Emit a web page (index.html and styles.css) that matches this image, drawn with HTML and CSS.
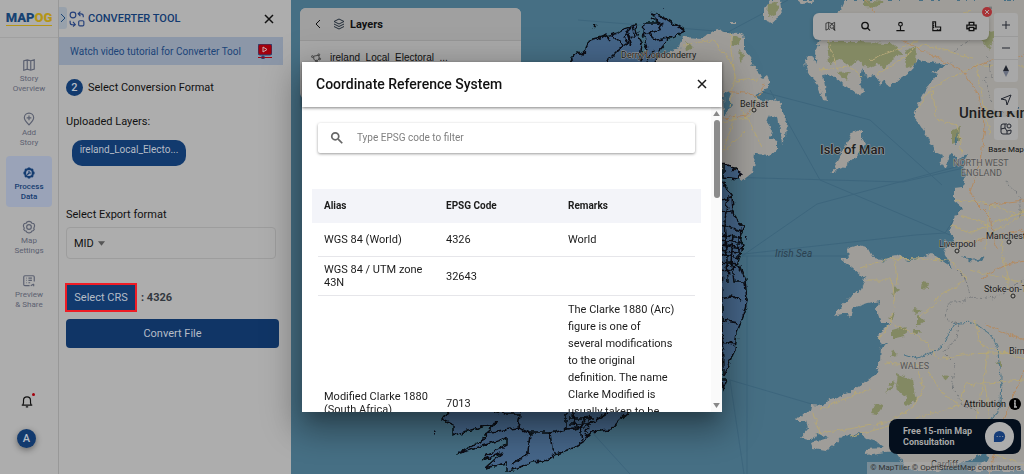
FILE: index.html
```html
<!DOCTYPE html>
<html lang="en">
<head>
  <meta charset="UTF-8">
  <meta name="viewport" content="width=device-width, initial-scale=1.0">
  <title>Converter Tool</title>
  <link rel="stylesheet" href="styles.css">
</head>
<body>
  <div class="app">

    <!-- Sidebar -->
    <nav class="sidebar">
      <a class="logo" href="#" aria-label="Home">
        <span class="logo-blue">MAP</span><span class="logo-yellow">OG</span>
      </a>
      <div class="nav">
        <a class="nav-item" href="#">
          <svg viewBox="0 0 24 24"><path d="M3 5l6-2 6 2 6-2v16l-6 2-6-2-6 2zM9 3v16M15 5v16"/></svg>
          Story<br>Overview
        </a>
        <a class="nav-item" href="#">
          <svg viewBox="0 0 24 24"><path d="M12 22c-5-5-8-8-8-12a8 8 0 0 1 16 0c0 4-3 7-8 12zM12 6v8M8 10h8"/></svg>
          Add<br>Story
        </a>
        <a class="nav-item active" href="#">
          <svg class="gear" viewBox="0 0 24 24"><path d="M12 2.500v19M2.500 12h19M5.300 5.300l13.400 13.400M18.700 5.300L5.300 18.700" stroke-width="4"/><circle cx="12" cy="12" r="7" stroke-width="3"/><circle class="gear-hole" cx="12" cy="12" r="5"/><path d="M12 12V8M12 12h4M12 12l-3 3" stroke-width="2"/></svg>
          Process<br>Data
        </a>
        <a class="nav-item" href="#">
          <svg viewBox="0 0 24 24"><path d="M8.500 3.500Q12 1 15.500 3.500l1.500 2 3 .5q2.500 3 1 6-1.500 3 0 4-1 3-4 3l-1.500 2q-3.500 2-7 0L7 19q-3 0-4-3 1.500-2 0-4-1.500-3 1-6l3-.5z"/><circle cx="12" cy="12" r="4"/></svg>
          Map<br>Settings
        </a>
        <a class="nav-item" href="#">
          <svg viewBox="0 0 24 24"><path d="M13 20H5a2 2 0 0 1-2-2V5a2 2 0 0 1 2-2h14a2 2 0 0 1 2 2v8M7 7h1M11 7h6M7 11h1M11 11h6M7 15h1M11 15h3M15 20l5-3M20 17v4"/></svg>
          Preview<br>&amp; Share
        </a>
      </div>
      <div class="account">
        <button class="bell" aria-label="Notifications">
          <svg viewBox="0 0 24 24"><path d="M3 19h18M5 19l1-4v-4a6 6 0 0 1 12 0v4l1 4M10 22h4"/></svg>
          <span class="bell-dot"></span>
        </button>
        <button class="avatar">A</button>
      </div>
    </nav>

    <!-- Converter panel -->
    <section class="panel">
      <header class="panel-header">
        <button class="collapse" aria-label="Collapse"><svg viewBox="0 0 8 12"><path d="M2 2l4 4-4 4"/></svg></button>
        <svg class="convert-icon" viewBox="0 0 28 28"><circle cx="7" cy="7" r="5"/><rect x="17" y="17" width="9" height="9" rx="2"/><path d="M25 11V9a4 4 0 0 0-4-4h-4M20 1l-4 4 4 4M2 17v3a4 4 0 0 0 4 4h4M7 19l4 5-4 3"/></svg>
        <h1>CONVERTER TOOL</h1>
        <button class="close" aria-label="Close"><svg viewBox="0 0 12 12"><path d="M2 2l8 8M10 2l-8 8"/></svg></button>
      </header>
      <a class="tutorial" href="#">
        Watch video tutorial for Converter Tool
        <svg viewBox="0 0 14 15"><rect width="14" height="11" rx="2" fill="#a3000c"/><path d="M5 3l4 2.500-4 2.500z" fill="none" stroke="#c9b0b2"/><path d="M0 13.500h14" stroke="#a3000c"/><circle cx="5" cy="13.500" r="1.500" fill="#a3000c"/></svg>
      </a>
      <div class="panel-body">
        <h2 class="step"><span class="step-number">2</span>Select Conversion Format</h2>
        <h3 class="uploaded-title">Uploaded Layers:</h3>
        <div class="layer-chip">ireland_Local_Electo...</div>
        <label class="export-label" for="format">Select Export format</label>
        <div class="select-box">
          <select id="format"><option>MID</option></select>
          <svg viewBox="0 0 8 5"><path d="M0 0h8L4 5z"/></svg>
        </div>
        <div class="crs-row">
          <button class="crs-btn">Select CRS</button>
          <span>: 4326</span>
        </div>
        <button class="convert-btn">Convert File</button>
      </div>
    </section>

    <!-- Map -->
    <main class="map">
      <svg class="map-canvas" viewBox="291 0 733 474" preserveAspectRatio="xMinYMin slice">
        <defs>
          <filter id="rough" x="0" y="0" width="100%" height="100%">
            <feTurbulence type="fractalNoise" baseFrequency="0.17" numOctaves="3" seed="4"/>
            <feDisplacementMap in="SourceGraphic" scale="6" xChannelSelector="R" yChannelSelector="G"/>
          </filter>
          <filter id="relief" x="0" y="0" width="100%" height="100%">
            <feTurbulence type="fractalNoise" baseFrequency="0.07" numOctaves="4" seed="9" result="noise"/>
            <feDiffuseLighting in="noise" surfaceScale="3" lighting-color="#ffffff" result="light"><feDistantLight azimuth="225" elevation="60"/></feDiffuseLighting>
            <feComposite in="light" in2="SourceGraphic" operator="in"/>
          </filter>
          <g id="land">
            <path d="M650 163V62l10-6 20-8 3-11 20 1 14-9 8 3 15 1 5 5v13l5 6 1 6 9 10 3 6 4-3 3 6-2 6-8 3-5 7 12 3 8-2 7 8 2 10 3 6-1 14-4 6-1-7-3-19-8-2-3 8 5 8-2 7 7 3v8l-7 6-15-1-1 9-2 10-10 8-17-11z"/>
            <path d="M845 0l-4 9-12 9-9 20-5 15 2 11-3-6-5-2-4 5 2 11 11 13 5 15 4 1-2-15-2-11 5-1 7 3 12 10 13 10 3-7-3-12 2-10 5 10 8-2 6 9 2-5 4 5 3 1 13-9 9-7 5-10 13 2 15 3 8-3-11 5-10 6 5 2-10 12-7 13-7 17 7 8 8 12 7 15 7 3-2 10 5 2 7-14 5 7 11-7-5 12 3 12-4 10-8 1v12l9 8-8 9-5 13 5 13-12 7 5 10 5 8-9-6-13-9-16 7-7 0-12-6-10 6-15 6-6 12-4 12-10 6-11 12-6 8 12-3 4 4 3-9 15-5 12-2-4 7 5 15 9 0-13 13 4 9 10-3-10 6-1 13-5 14-14 10-13 8-20 7-5 6-12-1-1 6-10 5-5 5 11 0 2 7-8 9 13 3 5-7 10 5-17 5 2 6 12 2 10-6 8-9 10-1 5-2 10 6 10 3 7 6-20 1 1 6 12-2 17-2 10 15 10 5h117V0z"/>
            <path d="M848 248l10-3 9 2 6 11 10 1-6 9-14 10-11-10-12-9 9 0z"/>
            <path d="M862 129v9l3 5-10 15-12 10-11 4 5-10 8-15 7-14z"/>
            <path d="M770 0l-6 8v12l8 3 10-8-2-15zM797 0l5 4 10-1 1-3zM730 22h6v2h-6z"/>
          </g>
        </defs>

        <rect x="291" width="733" height="474" fill="#466f84"/>
        <g fill="none" stroke="#3d667d" stroke-width="1">
          <path d="M690 260l225-25 30-2 52-77-180 48-75 52M755 90l115 30 72 65M770 90l50 90 130 55M723 177l180 5 65-15M742 256h105M747 256v218M730 380l85 25M730 380l14 94M578 20l150 12 60-32M590 430l40 44"/>
        </g>
        <g filter="url(#rough)">
          <use href="#land" fill="#9f9d99"/>
          <g fill="#838964">
            <path d="M827 42l28 0 35 1 13 10-12 7-6 9-7-6-10 5-10-8-8 7-9-7-12 3zM905 52l11-5-1 17-8 4zM837 72l12-1-3 10zM864 0l20 2-8 6-12-1zM732 36l8 2-1 8-8-2zM738 50l8 5-5 9zM685 42l8 5-7 4zM952 130l8-3-1 14-7 3zM978 35l20-5-10 20zM922 281l7 1-1 7-7-1zM895 285l5 6-8 5zM896 312l-4 8-4-2zM913 308l10 2-8 5zM917 314l8 7-8 6zM892 330l15-4-3 10-12 3zM912 330l9 0-6 6zM898 374l15 6 4 20-12 6 2-8-11-10zM893 380l2 5-10 9zM876 403l8 2-7 10-6-1zM892 350l6 4-8 2zM942 375l8 1-6 4zM996 364l6-4v7zM768 3l10-1-2 12-9 3z"/>
          </g>
          <path d="M723 95l8-3-2 7 4 6-9 11zM930 474l35-12 20-8 5 5-30 15zM962 255l12 5 12-4-4 6-14-1zM957 130l1 13-3 4z" fill="#466f84"/>
          <path d="M905 354l12 4 15-6 12-7 9-20 7-2 13-1 18 12 6 12 4 30-1 30-8 14" fill="none" stroke="#4d7588"/>
        </g>
        <use href="#land" filter="url(#relief)" opacity=".14"/>
        <g filter="url(#rough)" fill="none">
          <path d="M683 45l30-5 20 24 3 17 22-2M730 32l5 45-5 30M722 122l28-5 8-20M742 110l20 37M736 112l-13 40 22-20M820 70l30-3 12 9M870 60l50-20 50-30M877 76l45-32 50 14M828 40l10 30M917 110l15-23 45-22 47 1M932 90l5 30 20 5 5 28M977 65l5 30 8 40M955 200l30 3 35 12M960 215l30 10 34-14M950 225l20 8 54-22M958 240l15 3 50-28M990 205l-5 45M860 268l30-10 60 2 18 20M867 280l25 0 3 22-5 22-12 16M890 322l30 15 20 23 24-6 60-2M885 363l40 3 15 24 20 17 5-22 59-5M870 388l-50 22M812 410l8 23 35-5 30-5 27-15 12-20-8-25M850 437l50-14 60-18M940 300l-20 17M935 300l30-20M988 350l-5 35-13 65M895 260l2 24M975 320l5 25 44 14M985 385l10 70 29 10M970 270l54 13M1000 234l10 60" stroke="#b4a778"/>
          <path d="M723 91l22 2 13 5 6-14M757 100l-10 15-24 3M865 0l20 25 17 15 30 15 30 15 15 22 8 35-5 35-10 30 5 10 15 15 7 33M967 70l25-10 32-5M985 205l39-5M960 245l64-15M980 280l22-14 22-5M985 325l39 15M1024 370l-20 50-15 54M900 430l50 20 70 0" stroke="#b38b62"/>
          <path d="M953 52l10-7 20-15 8-25M987 55l5 20-8 5 8 20 15 15M1005 180l15 18v20M957 270l8 8 5 18-10 7-12 0-2 16 14 6-6 18-12 8 14 14-5 20 12 20 15 6M970 296l24 3 30-20" stroke="#777a7c" stroke-dasharray="3 2"/>
        </g>

        <!-- electoral areas -->
        <g filter="url(#rough)" fill="#456588" stroke="#080c12" stroke-width="1.500">
          <path d="M563 70l15-18 5 2 7-14 20-5 8-2 4-3 13-5 2 8 5 10-2 17 7-10-4-17 1-10 14 0-5-10 15 7 17 11-15 7-10 12-8 20z"/>
          <path d="M723 163l7 3 11 8-3 5-15-2zM720 178l7 10 5 7 1 18 10 15-3 9 3 10-5 15 7 18 2 20-4 17-6 15-2 18-12 25zM722 380h5l-4 9z"/>
          <path d="M450 410l-8 10 11 5 0 10 44-12-10 9-4 8-16 8-10 6 50-16 0 7-20 10-4 5 20-8-18 16 22-5 0 9 26-10 17-2 3-5 20-7 10-6 7-10 20-2 7-8 13-12z"/>
          <g fill="none">
            <path d="M603 65l20-20-10-10M623 45l12-8-3-10M630 28l-6 10 8 8-5-15M643 34l15-3 5-8M648 32l8 8 14-2M654 50l-8 15M598 40l8-6 4 6M650 18l15 8"/>
            <path d="M720 200l13-2M720 212l13-1M728 196l-3 24 2 30M720 225l23 6M720 235l22 3M720 240l23 3M720 245l24 3M720 250l22 4M720 254l19 4M720 262l18 2M733 235l-2 30M738 236v23M726 240l2 42M720 270l9 1 9-7M732 264l2 18 11 0M720 298l12-2 10 4M720 320l18 3M720 342l15 2"/>
            <path d="M490 410l16 4 14 0-2 14-35 5M518 428l12 5 20 0 16-4 18-2 24-14M530 433l-2 20-16 12M550 433l2 15 6 8M566 412v18M572 412l5 18 12-16M580 426l2 15M590 414l-3 18M568 418l25 0M570 424h22"/>
            <path d="M593 26l3 1M663 5h1M747 238h1M434 433h1" stroke-width="3"/>
          </g>
        </g>

        <!-- place names -->
        <g class="places">
          <text x="621" y="58">Derry/Londonderry</text>
          <text x="740" y="107">Belfast</text>
          <text x="939" y="247">Liverpool</text>
          <text x="986" y="239">Manchester</text>
          <text x="984" y="292">Stoke-on-Trent</text>
          <text x="1009" y="354">Birmingham</text>
          <text x="931" y="467">Cardiff</text>
          <text class="country" x="820" y="154">Isle of Man</text>
          <text class="country big" x="959" y="118">United Kingdom</text>
          <text class="region" x="953" y="166">NORTH WEST</text>
          <text class="region" x="961" y="176">ENGLAND</text>
          <text class="region" x="900" y="369">WALES</text>
          <text class="sea" x="775" y="257">Irish Sea</text>
        </g>
        <g fill="#a8a6a2" stroke="#222222">
          <circle cx="754" cy="110" r="2"/><circle cx="957" cy="251" r="2"/><circle cx="1009" cy="242" r="2"/><circle cx="1013" cy="296" r="2"/>
        </g>
      </svg>

      <div class="layers">
        <div class="layers-header">
          <button aria-label="Back"><svg class="back" viewBox="0 0 8 12"><path d="M6 2L2 6l4 4"/></svg></button>
          <svg class="stack" viewBox="0 0 24 24"><path d="M12 2l10 5-10 5L2 7zM2 12l10 5 10-5M2 17l10 5 10-5"/></svg>
          <h2>Layers</h2>
        </div>
        <div class="layers-row">
          <svg viewBox="0 0 24 24"><path d="M6 9l11-2 1 8-6 5-6-4z"/><circle cx="3" cy="10" r="2"/><circle cx="17" cy="6" r="2"/><circle cx="19" cy="15" r="2"/><circle cx="12" cy="20" r="2"/></svg>
          <span>ireland_Local_Electoral_...</span>
        </div>
      </div>

      <div class="toolbar">
        <button aria-label="Search map"><svg viewBox="0 0 24 24" stroke-width="1.500"><path d="M11 19l-3-2-6 3V5l6-2 7 3 6-3v17l-3-2M8 3v14M15 6v2"/><circle cx="15" cy="12" r="4"/><path d="M18 15l4 6"/></svg></button>
        <button aria-label="Search"><svg viewBox="0 0 24 24" stroke-width="3"><circle cx="11" cy="10" r="7"/><path d="M16 15l6 6"/></svg></button>
        <button aria-label="Marker"><svg viewBox="0 0 24 24" stroke-width="2.500"><circle cx="12" cy="7" r="4"/><path d="M12 11v10M3 21h18"/></svg></button>
        <button aria-label="Measure"><svg viewBox="0 0 24 24" stroke-width="2.500"><path d="M4 2h6v11h11v8H4zM4 6h3M4 10h3M4 14h3M14 21v-3M18 21v-3"/></svg></button>
        <button aria-label="Print"><svg viewBox="0 0 24 24" stroke-width="3"><path d="M7 8V3h10v5M6 17H2V9h20v8h-4M7 14h10v7H7z"/></svg></button>
        <button class="toolbar-close" aria-label="Close toolbar"><svg viewBox="0 0 10 10"><path d="M3 3l4 4M7 3L3 7"/></svg></button>
      </div>

      <div class="controls">
        <div class="zoom">
          <button aria-label="Zoom in"><svg viewBox="0 0 12 12"><path d="M6 2v8M2 6h8"/></svg></button>
          <button aria-label="Zoom out"><svg viewBox="0 0 12 12"><path d="M2 6h8"/></svg></button>
          <button aria-label="Reset north"><svg viewBox="0 0 12 12"><path d="M6 0l3 6H3z" class="north"/><path d="M6 12l3-6H3z" class="south"/></svg></button>
        </div>
        <button class="control" aria-label="Locate"><svg viewBox="0 0 12 12"><path d="M1 5l10-4-4 10-1-5z"/></svg></button>
        <button class="control" aria-label="Base map"><svg viewBox="0 0 12 12"><path d="M7 1H3a2 2 0 0 0-2 2v6a2 2 0 0 0 2 2h6a2 2 0 0 0 2-2V7M5 1v4L1 6M5 5l2 3v3M7 8l4-1"/><circle cx="9" cy="3" r="2"/></svg></button>
        <span>Base Map</span>
      </div>

      <div class="map-footer">
        <a class="attribution" href="#">Attribution
          <svg viewBox="0 0 12 12"><circle cx="6" cy="6" r="6"/><path d="M6 2v2M5 5h1v4M5 9h3" stroke="#b0b0b0" stroke-width="1.500"/></svg>
        </a>
        <button class="consult">
          <span>Free 15-min Map<br>Consultation</span>
          <span class="consult-icon"><svg viewBox="0 0 14 14"><path d="M7 1a6 6 0 0 1 0 12H1V7a6 6 0 0 1 6-6z" fill="#153c78"/><path d="M4 7h1M7 7h1M10 7h1" stroke="#b0b0b0"/></svg></span>
        </button>
        <p class="copyright">© MapTiler © OpenStreetMap contributors</p>
      </div>
    </main>
  </div>

  <!-- CRS dialog -->
  <div class="modal">
    <div class="dialog" role="dialog" aria-labelledby="dialogTitle">
      <header class="dialog-header">
        <h2 id="dialogTitle">Coordinate Reference System</h2>
        <button class="close" aria-label="Close dialog"><svg viewBox="0 0 12 12"><path d="M2 2l8 8M10 2l-8 8"/></svg></button>
      </header>
      <div class="dialog-main">
        <div class="dialog-scroll">
          <label class="search">
            <svg viewBox="0 0 24 24"><circle cx="9" cy="9" r="6"/><path d="M14 14l7 7"/></svg>
            <input type="text" placeholder="Type EPSG code to filter" aria-label="EPSG code">
          </label>
          <table>
            <thead>
              <tr><th>Alias</th><th>EPSG Code</th><th>Remarks</th></tr>
            </thead>
            <tbody>
              <tr><td>WGS 84 (World)</td><td>4326</td><td>World</td></tr>
              <tr><td>WGS 84 / UTM zone 43N</td><td>32643</td><td></td></tr>
              <tr><td>Modified Clarke 1880 (South Africa)</td><td>7013</td><td>The Clarke 1880 (Arc) figure is one of several modifications to the original definition. The name Clarke Modified is usually taken to be the RGS adaptation. It is used for the older national mapping networks of southern Africa.</td></tr>
            </tbody>
          </table>
        </div>
        <div class="scrollbar" aria-hidden="true">
          <svg viewBox="0 0 8 6"><path d="M4 0l4 6H0z"/></svg>
          <div class="track"><div class="thumb" style="height: 28%"></div></div>
          <svg viewBox="0 0 8 6"><path d="M4 6l4-6H0z"/></svg>
        </div>
      </div>
    </div>
  </div>
</body>
</html>
```

FILE: styles.css
```css
* {
  box-sizing: border-box;
}

body {
  margin: 0;
  font-family: Roboto, sans-serif;
  font-size: 11px;
  color: #111111;
  background-color: #adadad;
}

h1, h2, h3, p {
  margin: 0;
  font-weight: 400;
}

button {
  padding: 0;
  border: none;
  background: none;
  font-family: inherit;
  color: inherit;
  cursor: pointer;
}

a {
  color: inherit;
  text-decoration: none;
}

svg {
  display: block;
  flex-shrink: 0;
  fill: none;
  stroke: currentColor;
}

.app {
  display: flex;
  height: 100vh;
  overflow: hidden;
}

/* Sidebar */
.sidebar {
  width: 59px;
  flex-shrink: 0;
  display: flex;
  flex-direction: column;
  border-right: 1px solid #989898;
}

.logo {
  height: 38px;
  display: flex;
  align-items: center;
  justify-content: center;
  border-bottom: 1px solid #a0a0a0;
  font-size: 13px;
  font-weight: 900;
  line-height: 14px;
}

.logo span {
  border-bottom: 1px solid #b59516;
}

.logo-blue {
  color: #174373;
}

.logo-yellow {
  color: #b59516;
}

.nav {
  display: flex;
  flex-direction: column;
  align-items: center;
  gap: 3px;
  padding-top: 10px;
}

.nav-item {
  width: 46px;
  height: 51px;
  padding-top: 10px;
  border-radius: 4px;
  font-size: 8px;
  line-height: 10px;
  text-align: center;
  color: #5b6070;
}

.nav-item svg {
  width: 14px;
  height: 14px;
  margin: 0 auto 2px;
  stroke-width: 2;
}

.nav-item.active {
  background-color: #9aa3b8;
  color: #153c70;
  font-weight: 500;
}

.nav-item .gear-hole {
  fill: #9aa3b8;
  stroke: none;
}

.account {
  margin-top: auto;
  padding: 0 0 26px 17px;
  display: flex;
  flex-direction: column;
  gap: 21px;
}

.bell {
  position: relative;
  width: 20px;
}

.bell svg {
  width: 14px;
  height: 14px;
  margin: 0 auto;
  stroke-width: 2;
}

.bell-dot {
  position: absolute;
  top: -1px;
  right: 2px;
  width: 3px;
  height: 3px;
  border-radius: 50%;
  background-color: #a3000c;
}

.avatar {
  width: 19px;
  height: 19px;
  border-radius: 50%;
  background-color: #123a6e;
  color: #b5bcc6;
  font-size: 11px;
  font-weight: 500;
  box-shadow: 0 2px 6px rgba(0, 0, 0, 0.4);
}

/* Converter panel */
.panel {
  width: 232px;
  flex-shrink: 0;
}

.panel-header {
  height: 37px;
  display: flex;
  align-items: center;
  padding-right: 16px;
}

.collapse {
  width: 8px;
  height: 22px;
  margin-bottom: 2px;
  border-radius: 0 3px 3px 0;
  background-color: #98a1ab;
  color: #1f4775;
}

.collapse svg {
  width: 8px;
}

.convert-icon {
  width: 16px;
  height: 16px;
  margin: 0 3px 0 2px;
  color: #243f7a;
  stroke-width: 2;
}

.panel-header h1 {
  font-size: 11px;
  font-weight: 500;
  color: #123a70;
}

.close svg {
  width: 12px;
  height: 12px;
  stroke-width: 1.5px;
}

.panel-header .close {
  margin-left: auto;
}

.tutorial {
  height: 28px;
  margin-right: 8px;
  padding: 0 11px;
  display: flex;
  align-items: center;
  justify-content: space-between;
  background-color: #8c97a8;
  color: #1b4478;
  font-size: 10px;
}

.tutorial svg {
  width: 14px;
  height: 15px;
}

.panel-body {
  padding: 13px 12px 0 7px;
}

.step {
  display: flex;
  align-items: center;
  gap: 5px;
  height: 18px;
  font-size: 11px;
}

.step-number {
  width: 17px;
  height: 17px;
  border-radius: 50%;
  background-color: #123a6e;
  color: #b5bcc6;
  font-size: 11px;
  font-weight: 500;
  line-height: 17px;
  text-align: center;
}

.uploaded-title {
  margin-top: 18px;
  font-size: 11px;
  line-height: 16px;
}

.layer-chip {
  width: 114px;
  height: 26px;
  margin: 10px 6px 0;
  border-radius: 10px;
  background-color: #123a6e;
  color: #b5bcc6;
  font-size: 10px;
  line-height: 20px;
  text-align: center;
}

.export-label {
  display: block;
  margin-top: 41px;
  line-height: 16px;
}

.select-box {
  height: 32px;
  margin: 4px 3px 0 0;
  padding: 0 7px;
  display: flex;
  align-items: center;
  gap: 4px;
  border: 1px solid #9d9d9d;
  border-radius: 4px;
}

.select-box select {
  appearance: none;
  padding: 0;
  border: none;
  background: none;
  font-family: inherit;
  font-size: 11px;
  color: inherit;
}

.select-box svg {
  width: 7px;
  height: 5px;
  fill: #555555;
  stroke: none;
}

.crs-row {
  display: flex;
  align-items: center;
  gap: 4px;
  margin-top: 24px;
  font-weight: 700;
  color: #32383f;
}

.crs-btn {
  width: 72px;
  height: 29px;
  margin-left: -1px;
  border: 2px solid #ee1c25;
  background-color: #123a6e;
  color: #b5bcc6;
  font-size: 11px;
}

.convert-btn {
  width: 100%;
  height: 29px;
  margin-top: 7px;
  border-radius: 4px;
  background-color: #103566;
  color: #b5bcc6;
  font-size: 11px;
}

/* Map */
.map {
  position: relative;
  flex: 1;
  min-width: 0;
}

.map-canvas {
  position: absolute;
  width: 100%;
  height: 100%;
  stroke: none;
}

.places text {
  font-size: 9px;
  fill: #202020;
  stroke: #a5a39f;
  stroke-width: 1px;
  paint-order: stroke;
}

.places .country {
  font-size: 13px;
  font-weight: 500;
}

.places .big {
  font-size: 15px;
}

.places .region {
  font-size: 9px;
  fill: #555555;
}

.places .sea {
  font-size: 10px;
  font-style: italic;
  fill: #2b4150;
  stroke: none;
}

.layers {
  position: absolute;
  top: 8px;
  left: 9px;
  width: 221px;
  height: 91px;
  border-radius: 6px;
  background-color: #a8a8a8;
  overflow: hidden;
}

.layers-header {
  height: 33px;
  padding-left: 14px;
  display: flex;
  align-items: center;
  background-color: #a0a0a0;
  border-bottom: 1px solid #969696;
}

.layers-header h2 {
  font-size: 11px;
  font-weight: 700;
}

.layers .back {
  width: 8px;
  height: 12px;
}

.layers .stack {
  width: 12px;
  height: 12px;
  margin: 0 5px 0 11px;
  color: #222c38;
  stroke-width: 2;
}

.layers-row {
  display: flex;
  gap: 8px;
  padding: 11px 11px;
  font-family: "Liberation Sans", sans-serif;
  font-size: 10px;
  line-height: 12px;
}

.layers-row svg {
  width: 11px;
  height: 11px;
  color: #444444;
  stroke-width: 2;
}

.toolbar {
  position: absolute;
  top: 13px;
  right: 35px;
  width: 176px;
  height: 27px;
  display: flex;
  align-items: center;
  justify-content: space-around;
  border-radius: 6px;
  background-color: #a8a8a8;
  box-shadow: 0 2px 4px rgba(0, 0, 0, 0.2);
}

.toolbar svg {
  width: 11px;
  height: 11px;
}

.toolbar-close {
  position: absolute;
  top: -6px;
  right: -3px;
  width: 10px;
  height: 10px;
  border-radius: 50%;
  background-color: #a83236;
  color: #b5a5a5;
}

.toolbar .toolbar-close svg {
  width: 10px;
  height: 10px;
}

.controls {
  position: absolute;
  top: 13px;
  right: 0;
  width: 36px;
  display: flex;
  flex-direction: column;
  align-items: center;
  gap: 6px;
  font-size: 8px;
  line-height: 8px;
  white-space: nowrap;
}

.zoom {
  border-radius: 3px;
  background-color: #a8a8a8;
}

.zoom button,
.control {
  width: 24px;
  height: 23px;
  display: flex;
  align-items: center;
  justify-content: center;
  color: #20242e;
}

.zoom button + button {
  border-top: 1px solid #9a9a9a;
}

.control {
  border-radius: 3px;
  background-color: #a8a8a8;
}

.controls svg {
  width: 12px;
  height: 12px;
}

.controls .north {
  fill: #20242e;
  stroke: none;
}

.controls .south {
  fill: #6a7080;
  stroke: none;
}

.map-footer {
  position: absolute;
  right: 0;
  bottom: 0;
  display: flex;
  flex-direction: column;
  align-items: flex-end;
}

.attribution {
  display: flex;
  align-items: center;
  gap: 3px;
  margin-right: 3px;
  font-size: 9px;
}

.attribution svg {
  width: 12px;
  height: 12px;
}

.attribution circle {
  fill: #000000;
  stroke: none;
}

.consult {
  width: 132px;
  height: 35px;
  margin: 9px 3px 8px 0;
  padding: 0 7px 0 14px;
  display: flex;
  align-items: center;
  justify-content: space-between;
  border-radius: 8px;
  background-color: #040f1d;
  color: #a8a8a8;
  font-size: 9px;
  font-weight: 700;
  line-height: 11px;
  text-align: left;
}

.consult-icon {
  width: 29px;
  height: 29px;
  display: flex;
  align-items: center;
  justify-content: center;
  border-radius: 50%;
  background-color: #adadad;
}

.consult-icon svg {
  width: 13px;
  height: 13px;
  stroke: none;
}

.copyright {
  padding: 0 3px;
  background-color: rgba(170, 170, 170, 0.5);
  font-size: 8px;
  line-height: 12px;
  color: #303030;
}

/* CRS dialog */
.modal {
  position: fixed;
  inset: 0;
  display: flex;
  align-items: center;
  justify-content: center;
}

.dialog {
  width: 420px;
  max-width: 90vw;
  height: 74vh;
  display: flex;
  flex-direction: column;
  background-color: #ffffff;
  color: #1c1c1c;
  box-shadow: 0 11px 15px -7px rgba(0, 0, 0, 0.2), 0 16px 30px 3px rgba(0, 0, 0, 0.25), 0 9px 36px 8px rgba(0, 0, 0, 0.15);
}

.dialog-header {
  position: relative;
  height: 45px;
  flex-shrink: 0;
  padding: 0 14px;
  display: flex;
  align-items: center;
  justify-content: space-between;
  box-shadow: 0 1px 3px rgba(0, 0, 0, 0.5);
}

.dialog-header h2 {
  font-size: 14px;
  font-weight: 500;
  color: #111111;
}

.dialog-main {
  flex: 1;
  min-height: 0;
  display: flex;
}

.dialog-scroll {
  flex: 1;
  padding: 16px 16px 0;
  overflow-y: auto;
  scrollbar-width: none;
}

.search {
  height: 30px;
  padding: 0 12px;
  display: flex;
  align-items: center;
  gap: 13px;
  border-radius: 2px;
  box-shadow: 0 1px 3px rgba(0, 0, 0, 0.4);
}

.search svg {
  width: 14px;
  height: 14px;
  color: #666666;
  stroke-width: 3;
}

.search input {
  flex: 1;
  border: none;
  outline: none;
  padding: 0;
  background: none;
  font-family: inherit;
  font-size: 10px;
}

.search input::placeholder {
  color: #808080;
}

table {
  width: 100%;
  margin-top: 36px;
  border-collapse: collapse;
  table-layout: fixed;
}

thead tr {
  background-color: #f3f4f9;
  box-shadow: -6px 0 #f3f4f9, 6px 0 #f3f4f9;
}

th {
  padding: 0 6px;
  font-size: 10px;
  font-weight: 700;
  text-align: left;
}

th:last-child {
  width: 133px;
}

td {
  padding: 6px;
  border-bottom: 1px solid #e6e6ea;
  font-size: 11px;
  line-height: 13px;
}

td:last-child {
  padding: 5px 20px 5px 6px;
  line-height: 17px;
}

tr {
  height: 34px;
}

.scrollbar {
  width: 11px;
  padding: 4px 2px;
  display: flex;
  flex-direction: column;
  align-items: center;
  gap: 4px;
  background-color: #fafafa;
}

.scrollbar svg {
  width: 7px;
  height: 5px;
  fill: #888888;
  stroke: none;
}

.track {
  flex: 1;
  width: 6px;
}

.thumb {
  border-radius: 3px;
  background-color: #8b8b8b;
}
```
